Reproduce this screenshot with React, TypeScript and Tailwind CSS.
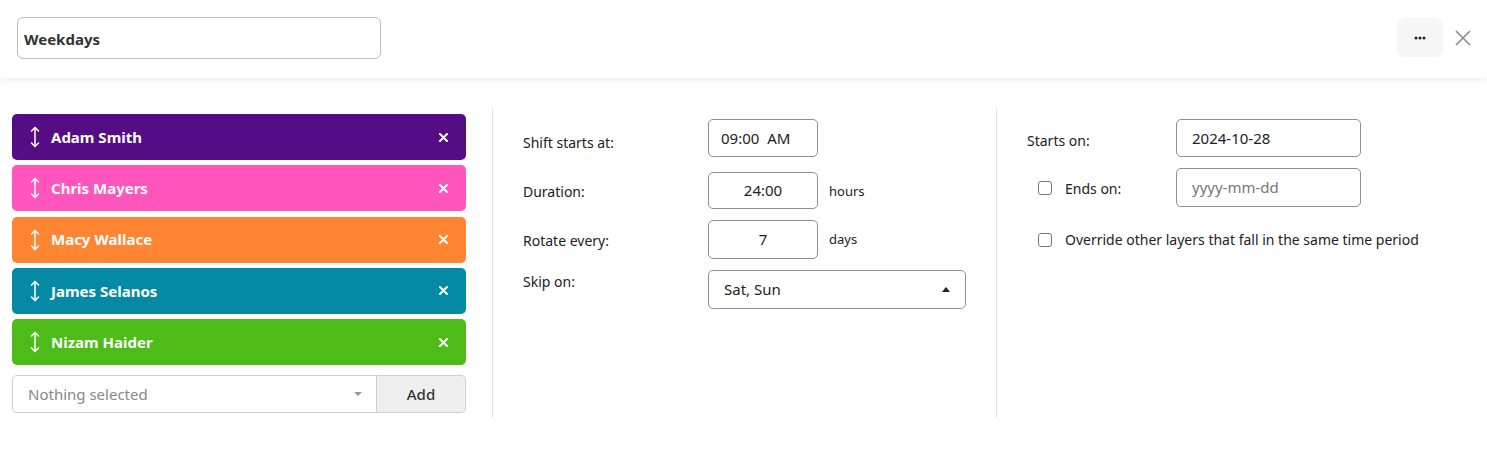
import React from "react";

const people = [
  { name: "Adam Smith", color: "bg-[#560c85]" },
  { name: "Chris Mayers", color: "bg-[#ff55bd]" },
  { name: "Macy Wallace", color: "bg-[#ff8533]" },
  { name: "James Selanos", color: "bg-[#048aa4]" },
  { name: "Nizam Haider", color: "bg-[#4dbb18]" },
];

function UpDown() {
  return (
    <svg width="10" height="22" viewBox="0 0 10 22" fill="none" stroke="white" strokeWidth="1.5" strokeLinecap="round" strokeLinejoin="round">
      <path d="M5 1.5 V20.5" />
      <path d="M1.5 5 L5 1.5 L8.5 5" />
      <path d="M1.5 17 L5 20.5 L8.5 17" />
    </svg>
  );
}

function SmallX() {
  return (
    <svg width="9" height="9" viewBox="0 0 9 9" stroke="white" strokeWidth="2" strokeLinecap="round">
      <path d="M1 1 L8 8 M8 1 L1 8" />
    </svg>
  );
}

function Checkbox() {
  return <span className="inline-block w-[14px] h-[14px] border border-[#767676] rounded-[3px] bg-white" />;
}

export default function App() {
  return (
    <div className="w-[1487px] h-[452px] bg-white text-[#222] overflow-hidden" style={{ fontFamily: '"Noto Sans", sans-serif' }}>
      {/* header */}
      <div className="h-[78px] flex items-start justify-between pl-[17px] pr-[16px] pt-[17px] shadow-[0_3px_6px_rgba(0,0,0,0.06)] relative">
        <div className="w-[364px] h-[42px] border border-[#bdbdbd] rounded-[6px] flex items-center px-[6px] pt-[2px] text-[15px] font-bold text-[#333]">
          Weekdays
        </div>
        <div className="flex items-center gap-[12px] pt-[1px]">
          <div className="w-[46px] h-[39px] rounded-[8px] bg-[#f6f6f6] flex items-center justify-center">
            <svg width="12" height="4" viewBox="0 0 12 4" fill="#222">
              <circle cx="2" cy="2" r="1.5" />
              <circle cx="6" cy="2" r="1.5" />
              <circle cx="10" cy="2" r="1.5" />
            </svg>
          </div>
          <svg width="16" height="16" viewBox="0 0 16 16" stroke="#8a8a8a" strokeWidth="1.6">
            <path d="M1 1 L15 15 M15 1 L1 15" />
          </svg>
        </div>
      </div>

      {/* body */}
      <div className="flex pl-[12px] pt-[30px]">
        {/* left */}
        <div className="w-[454px] pt-[6px] flex flex-col gap-[5.25px]">
          {people.map((p) => (
            <div key={p.name} className={`${p.color} h-[46px] rounded-[5px] flex items-center pl-[18px] pr-[18px] text-white`}>
              <UpDown />
              <span className="ml-[11px] text-[15px] font-bold flex-1">{p.name}</span>
              <SmallX />
            </div>
          ))}
          <div className="flex mt-[4.75px] h-[38px]">
            <div className="flex-1 border border-[#d0d0d0] rounded-l-[5px] flex items-center pl-[15px] pr-[14px] text-[15px] text-[#888]">
              <span className="flex-1">Nothing selected</span>
              <span className="w-0 h-0 border-l-[4px] border-r-[4px] border-t-[4px] border-l-transparent border-r-transparent border-t-[#999]" />
            </div>
            <div className="w-[89px] bg-[#efefef] border border-l-0 border-[#d0d0d0] rounded-r-[5px] flex items-center justify-center text-[15px] font-medium text-[#333]">
              Add
            </div>
          </div>
        </div>

        {/* middle */}
        <div className="ml-[26px] w-[504px] h-[310px] border-l border-[#e2e2e2] pl-[30px] pt-[11px] flex flex-col text-[14px]">
          <div className="flex items-center h-[38px]">
            <span className="w-[185px] pt-[8px]">Shift starts at:</span>
            <div className="w-[110px] h-[38px] border border-[#8f8f8f] rounded-[5px] flex items-center pl-[12px] text-[15px]">09:00&nbsp; AM</div>
          </div>
          <div className="flex items-center h-[37px] mt-[15px]">
            <span className="w-[185px] pt-[2px]">Duration:</span>
            <div className="w-[110px] h-[37px] border border-[#8f8f8f] rounded-[5px] flex items-center justify-center text-[15px]">24:00</div>
            <span className="ml-[11px] text-[13px] pt-[3px]">hours</span>
          </div>
          <div className="flex items-center h-[39px] mt-[11px]">
            <span className="w-[185px] pt-[2px]">Rotate every:</span>
            <div className="w-[110px] h-[39px] border border-[#8f8f8f] rounded-[5px] flex items-center justify-center text-[15px]">7</div>
            <span className="ml-[11px] text-[13px]">days</span>
          </div>
          <div className="flex items-start mt-[11px]">
            <span className="w-[185px] pt-[1px]">Skip on:</span>
            <div className="w-[258px] h-[39px] border border-[#8f8f8f] rounded-[5px] flex items-center pl-[15px] pr-[15px] text-[15px]">
              <span className="flex-1">Sat, Sun</span>
              <span className="w-0 h-0 border-l-[4px] border-r-[4px] border-b-[5px] border-l-transparent border-r-transparent border-b-[#222]" />
            </div>
          </div>
        </div>

        {/* right */}
        <div className="w-[491px] h-[310px] border-l border-[#e2e2e2] pl-[30px] pt-[11px] text-[14px]">
          <div className="flex items-center h-[38px]">
            <span className="w-[149px] pt-[4px]">Starts on:</span>
            <div className="w-[185px] h-[38px] border border-[#8f8f8f] rounded-[5px] flex items-center pl-[15px] text-[15px]">2024-10-28</div>
          </div>
          <div className="flex items-center h-[39px] mt-[11px]">
            <div className="w-[149px] flex items-center pl-[11px]">
              <Checkbox />
              <span className="ml-[13px] pt-[1px]">Ends on:</span>
            </div>
            <div className="w-[185px] h-[39px] border border-[#8f8f8f] rounded-[5px] flex items-center pl-[15px] text-[15px] text-[#777]">yyyy-mm-dd</div>
          </div>
          <div className="flex items-center mt-[22px] pl-[11px]">
            <Checkbox />
            <span className="ml-[13px]">Override other layers that fall in the same time period</span>
          </div>
        </div>
      </div>
    </div>
  );
}
